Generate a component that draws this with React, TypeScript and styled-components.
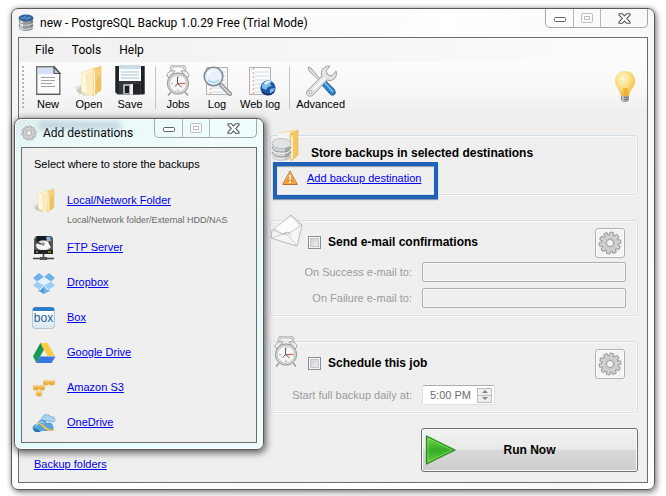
import React from "react";
import styled, { createGlobalStyle } from "styled-components";

const GlobalStyle = createGlobalStyle`
  * { box-sizing: border-box; }
  body { margin: 0; background: #fff; }
  button, input { font: inherit; color: inherit; margin: 0; }
`;

const Page = styled.main`
  padding: 8px 11px 6px;
  font: 11px/15px "Liberation Sans", Arial, sans-serif;
  color: #000;
`;

const Frame = styled.section`
  border: 1px solid #5a5a5a;
  border-radius: 7px;
  padding: 0 6px 6px;
`;

const MainWindow = styled(Frame)`
  position: relative;
  background: linear-gradient(100deg, #f3f3f3 0, #fff 12%, #fbfbfb 50%, #fff 60%, #f8f8f8 90%, #fff 100%);
  box-shadow: 0 0 5px rgba(0, 0, 0, 0.35), 2px 3px 6px rgba(0, 0, 0, 0.35);
`;

const Dialog = styled(Frame)`
  position: absolute;
  left: 2px;
  top: 109px;
  width: 250px;
  background: linear-gradient(150deg, #dcebeb 0, #e9f8f8 8%, #f2fdfd 30%, #e2fafa 60%, #effdfd 100%);
  box-shadow: inset 0 0 0 1px #fafeff, 1px 2px 7px 1px rgba(0, 0, 0, 0.6);
`;

const Smudge = styled.span`
  position: absolute;
  left: 18px;
  top: 3px;
  width: 82px;
  height: 7px;
  background: #8ea9c4;
  opacity: 0.5;
  filter: blur(3px);
`;

const TitleBar = styled.header`
  position: relative;
  display: flex;
  align-items: center;
  height: 28px;
  font-size: 12px;
`;

const Title = styled.h1`
  flex: 1;
  margin: 0 0 0 6px;
  font: 12px/16px Roboto, "Liberation Sans", sans-serif;
`;

const WindowButtons = styled.div`
  align-self: flex-start;
  display: flex;
  height: 19px;
  border: 1px solid #a4a8aa;
  border-top: 0;
  border-radius: 0 0 5px 5px;
`;

const WindowButton = styled.button<{ $wide?: boolean }>`
  width: ${(p) => (p.$wide ? 47 : 27)}px;
  padding: 0;
  border: 0;
  border-left: 1px solid #b4b8ba;
  background: none;
  display: flex;
  align-items: center;
  justify-content: center;
  &:first-child { border-left: 0; }
`;

const Client = styled.div`
  border: 1px solid #6d6d6d;
  background: #efefef;
`;

const MenuBar = styled.nav`
  display: flex;
  height: 24px;
  padding-left: 10px;
  background: linear-gradient(90deg, #f0f0f0, #fcfcfc);
`;

const MenuItem = styled.button`
  border: 0;
  background: none;
  padding: 0 12px 0 6px;
  font: 12px/24px Roboto, "Liberation Sans", sans-serif;
`;

const ToolBar = styled.div`
  display: flex;
  gap: 1px;
  height: 50px;
  padding: 3px 11px 0 3px;
  background: linear-gradient(#fcfcfc, #f7f7f7 60%, #efefef);
`;

const Grip = styled.span`
  width: 2px;
  height: 43px;
  margin: 1px 3px 0 0;
  background: repeating-linear-gradient(#b5b5b5 0 2px, transparent 2px 4px);
`;

const Tool = styled.button<{ $narrow?: boolean }>`
  min-width: ${(p) => (p.$narrow ? 36 : 40)}px;
  padding: 0 ${(p) => (p.$narrow ? 0 : 4)}px;
  border: 0;
  background: none;
  display: flex;
  flex-direction: column;
  align-items: center;
  line-height: 15px;
  white-space: nowrap;
  svg { display: block; }
`;

const ToolSeparator = styled.span`
  width: 1px;
  height: 43px;
  margin: 1px 1px 0 4px;
  background: #c4c4c4;
`;

const Hint = styled.button`
  margin-left: auto;
  border: 0;
  padding: 0;
  background: none;
  align-self: center;
`;

const Body = styled.div`
  display: flex;
  padding: 23px 9px 10px 15px;
`;

const Side = styled.div`
  flex: 0 0 236px;
  display: flex;
  flex-direction: column;
  justify-content: flex-end;
  align-items: flex-start;
`;

const Jobs = styled.div`
  flex: 1;
  display: flex;
  flex-direction: column;
  gap: 25px;
`;

const Link = styled.a`
  color: #0000f0;
  text-decoration: underline;
`;

const Panel = styled.section`
  position: relative;
  padding: 7px 11px 7px 37px;
  border: 1px solid #d3dfe8;
  border-radius: 3px;
  box-shadow: inset 0 0 0 1px #f8f8f8, 0 1px 0 #fafafa;
`;

const PanelIcon = styled.span<{ $small?: boolean }>`
  position: absolute;
  left: ${(p) => (p.$small ? 0 : -2)}px;
  top: ${(p) => (p.$small ? -6 : -8)}px;
  svg { display: block; }
`;

const Heading = styled.h2`
  margin: 0 0 5px 3px;
  font: bold 12px/20px "Liberation Sans", Arial, sans-serif;
`;

const LinkRow = styled.div`
  display: flex;
  align-items: center;
  height: 20px;
  margin-bottom: -1px;
  svg { margin: 0 9px 0 -26px; }
`;

const Marker = styled.span`
  position: absolute;
  inset: 26px auto -5px 2px;
  width: 165px;
  border: 4px solid #1f62b8;
  box-shadow: 0 1px 1px #8c99a8, inset 0 1px 1px #8c99a8;
  pointer-events: none;
`;

const PanelHead = styled.div<{ $spaced?: boolean }>`
  display: flex;
  align-items: center;
  justify-content: space-between;
  margin-bottom: ${(p) => (p.$spaced ? 6 : 4)}px;
`;

const CheckLabel = styled.label`
  display: flex;
  align-items: center;
  gap: 7px;
  margin-top: -2px;
  font: bold 12px/16px "Liberation Sans", Arial, sans-serif;
`;

const Check = styled.input`
  appearance: none;
  width: 13px;
  height: 13px;
  border: 1px solid #8b8f92;
  background: linear-gradient(135deg, #c6cbd0, #f4f4f4);
  box-shadow: inset 0 0 0 1px #f4f4f4, inset 0 0 0 2px #c4c8cb;
`;

const GearButton = styled.button`
  display: grid;
  place-items: center;
  width: 30px;
  height: 30px;
  margin-right: 1px;
  padding: 0;
  border: 1px solid #aeb2b5;
  border-radius: 3px;
  background: #f4f4f4;
  box-shadow: inset 0 0 0 1px #fcfcfc;
`;

const FieldRow = styled.div`
  display: grid;
  grid-template-columns: 104px 1fr;
  column-gap: 10px;
  align-items: center;
  color: #9b9b9b;
  & + & { margin-top: 6px; }
`;

const FieldLabel = styled.label`
  justify-self: end;
  white-space: nowrap;
`;

const TextInput = styled.input`
  width: 100%;
  min-width: 0;
  height: 20px;
  border: 1px solid #afafaf;
  border-radius: 2px;
  background: #efefef;
  box-shadow: inset 0 0 0 1px #f7f7f7;
`;

const TimeBox = styled.div`
  display: flex;
  align-items: center;
  width: 73px;
  height: 20px;
  padding: 0 2px 0 7px;
  border: 1px solid #dbe3ea;
  border-top-color: #abadb3;
  border-radius: 2px;
  background: #fff;
`;

const TimeInput = styled.input`
  flex: 1;
  min-width: 0;
  padding: 0;
  border: 0;
  background: none;
  color: #6d6d6d;
  font: 11px/16px "Liberation Sans", Arial, sans-serif;
`;

const Spinner = styled.span`
  display: grid;
  width: 15px;
  height: 15px;
  border: 1px solid #bdbdbd;
`;

const SpinButton = styled.button`
  display: grid;
  place-items: center;
  padding: 0;
  border: 0;
  background: #efefef;
  & + & { border-top: 1px solid #bdbdbd; }
`;

const RunButton = styled.button`
  position: relative;
  align-self: flex-end;
  width: 217px;
  height: 44px;
  margin-top: -10px;
  border: 1px solid #707070;
  border-radius: 3px;
  background: linear-gradient(#f2f2f2, #e9e9e9 48%, #d9d9d9 50%, #cdcdcd);
  box-shadow: inset 0 0 0 1px #fafafa;
  font: bold 12px/16px "Liberation Sans", Arial, sans-serif;
  svg { position: absolute; left: 3px; top: 5px; }
`;

const DialogText = styled.p`
  margin: 0;
  padding: 0 0 3px 12px;
  line-height: 32px;
`;

const DestinationList = styled.ul`
  list-style: none;
  margin: 0;
  padding: 0 0 2px 10px;
`;

const Destination = styled.li`
  display: grid;
  grid-template-columns: 24px 1fr;
  grid-template-rows: 35px;
  column-gap: 11px;
  align-items: center;
  justify-items: start;
  svg { display: block; }
`;

const Note = styled.span`
  grid-column: 2;
  margin: -4px 0 4px;
  font: 9px/12px "Liberation Sans", Arial, sans-serif;
  color: #686868;
  white-space: nowrap;
`;

/* ---------- drawings ---------- */

const gearTeeth = Array.from({ length: 10 }, (_, i) => i * 36);

const GearIcon = ({ size }: { size: number }) => (
  <svg width={size} height={size} viewBox="0 0 24 24">
    <g fill="#c9c9c9" stroke="#a0a0a0" strokeWidth="1.2">
      {gearTeeth.map((a) => (
        <rect key={a} x="10.1" y="1.2" width="3.8" height="6" rx="1" transform={`rotate(${a + 10} 12 12)`} />
      ))}
      <circle cx="12" cy="12" r="8.2" />
    </g>
    <g fill="#d2d2d2">
      {gearTeeth.map((a) => (
        <rect key={a} x="10.8" y="2" width="2.4" height="5" transform={`rotate(${a + 10} 12 12)`} />
      ))}
      <circle cx="12" cy="12" r="7.7" />
    </g>
    <circle cx="12" cy="12" r="5" fill="none" stroke="#c6c6c6" strokeWidth="1.4" />
    <circle cx="12" cy="12" r="3.6" fill="#f4f4f4" stroke="#9b9b9b" strokeWidth="1" />
  </svg>
);

const DatabaseIcon = () => (
  <svg width="16" height="18" viewBox="0 0 16 18">
    <path d="M1 4v10c0 2 3 3 7 3s7-1 7-3V4z" fill="#9a9ea1" />
    <path d="M2 4v11l3 1.4V5z" fill="#d7d9da" />
    <path d="M12 5v11l3-2V4z" fill="#7f8487" />
    <path d="M1 8c0 2 3 3 7 3s7-1 7-3M1 12c0 2 3 3 7 3s7-1 7-3" fill="none" stroke="#e4e6e7" strokeWidth="1" />
    <path d="M1 7c0 2 3 3 7 3s7-1 7-3M1 11c0 2 3 3 7 3s7-1 7-3" fill="none" stroke="#85898c" strokeWidth=".8" />
    <ellipse cx="8" cy="4" rx="7.5" ry="3.6" fill="#2f639d" />
    <path d="M3 4h2M6 3h2M8 5h2M11 3.500h2M6 5V3M10 5V3" stroke="#8fb6dc" strokeWidth=".9" />
  </svg>
);

const MinimizeIcon = () => (
  <svg width="12" height="12" viewBox="0 0 12 12">
    <rect x=".5" y="5.500" width="11" height="4" rx="1" fill="#fff" stroke="#5b6068" />
  </svg>
);
const MaximizeIcon = () => (
  <svg width="12" height="10" viewBox="0 0 12 10">
    <rect x=".5" y=".5" width="11" height="9" rx="1" fill="#fafafa" stroke="#bfbfbf" />
    <rect x="3.500" y="3.500" width="5" height="3" fill="#fff" stroke="#bfbfbf" />
  </svg>
);
const CloseIcon = () => (
  <svg width="13" height="11" viewBox="0 0 13 11">
    <path d="M1 .7h3.300L6.500 3 8.700.7H12v1.400L8.700 5.500 12 8.900v1.400H8.700L6.500 8l-2.200 2.300H1V8.900l3.300-3.400L1 2.100z" fill="#fff" stroke="#51565e" strokeWidth="1.1" />
  </svg>
);

const NewIcon = () => (
  <svg width="30" height="32" viewBox="0 0 30 32">
    <path d="M3.700 1.700h17.500l5.600 6.500v21.100H3.700z" fill="#fbfbfb" stroke="#707274" strokeWidth="1.4" />
    <path d="M5 3h15v6H5z" fill="#d5e0f6" />
    <path d="M21 2v6.500h6z" fill="#c9cbce" stroke="#4d5052" strokeWidth="1.2" />
    <path d="M8 12.500h14M8 15.500h14M8 18.500h11M8 21.500h14" stroke="#a1a3a5" strokeWidth="1" />
    <path d="M3 29.500h24" stroke="#55585a" />
  </svg>
);

const FolderIcon = ({ size }: { size: number }) => (
  <svg width={size} height={size} viewBox="0 0 30 32">
    <path d="M1 22l6-2v9l-2 1z" fill="#c5b9a2" opacity=".4" />
    <path d="M2 26l5-4 8 8-4 1z" fill="#9d9481" opacity=".3" />
    <path d="M7 7l14-5 2 2v25l-9 2-7-5z" fill="#fae7b8" />
    <path d="M8 8l9-3v25l-9-4z" fill="#fff8e4" />
    <path d="M11 9l10-5v23l-8 3z" fill="#fdebc0" />
    <path d="M20 4l7-3v24l-8 6z" fill="#f7d078" />
    <path d="M19 6l2-1v24l-2 2z" fill="#fff5d6" />
    <path d="M23 12l4-2v15l-6 4z" fill="#eab54a" opacity=".55" />
    <path d="M20 4l7-3v24l-8 6z" fill="none" stroke="#e6c06c" strokeWidth=".6" />
  </svg>
);

const SaveIcon = () => (
  <svg width="30" height="32" viewBox="0 0 30 32">
    <path d="M.5 1h29v28.500H2.500l-2-2z" fill="#33363b" />
    <path d="M.5 1h3v27l-3-1zM26 1h3.500v28H26z" fill="#1d2024" />
    <path d="M4 0h22v16H4z" fill="#fafcfd" />
    <path d="M4 0h22v4H4z" fill="#cbdde7" />
    <path d="M6 7h18M6 10h18M6 13h18" stroke="#a9c2cf" strokeWidth="1.2" />
    <path d="M8 19h17v10.500H8z" fill="#a9acae" />
    <path d="M18 19h7v10.500h-7z" fill="#222529" />
    <path d="M10 21h4v7h-4z" fill="#1c1e21" />
    <path d="M15 19h3v10.500h-3z" fill="#ededed" />
  </svg>
);

const ClockIcon = () => (
  <svg width="30" height="32" viewBox="0 0 30 32">
    <path d="M8 8V4q0-3 3-3h8q3 0 3 3v4" fill="none" stroke="#9c9c9c" strokeWidth="2.400" />
    <path d="M8 8V4q0-3 3-3h8q3 0 3 3v4" fill="none" stroke="#f3f3f3" strokeWidth="1.1" />
    <path d="M4 11c0-4 4-6 8-5l-6 7zM26 11c0-4-4-6-8-5l6 7z" fill="#ededed" stroke="#a0a0a0" />
    <path d="M8 27l-3 3.500M22 27l3 3.500" stroke="#969696" strokeWidth="1.400" />
    <circle cx="15" cy="18.500" r="10.6" fill="#dcdcdc" stroke="#8f8f8f" />
    <circle cx="15" cy="18.500" r="8.600" fill="#f7f7f7" stroke="#b8b8b8" strokeWidth=".8" />
    <path d="M15 11v2M15 24v2M8 18.500h2M20 18.500h2" stroke="#aaa" />
    <path d="M14.500 18.500h8" stroke="#d06555" strokeWidth="1.200" />
    <path d="M14.500 12v6.500l4 3.500M14.500 18.500l-2.500 3" fill="none" stroke="#5a5a5a" strokeWidth="1" />
  </svg>
);

const PageLines = () => (
  <>
    <path d="M5.500 2.500h21v27h-21z" fill="#fbfbfb" stroke="#aeb2b6" />
    <path d="M11 7h14M11 11h14M11 15h14M11 19h14M11 23h14M11 27h14" stroke="#cbdcf1" strokeWidth="1.200" />
    <path d="M9.500 3v26" stroke="#f0b28f" strokeDasharray="2 2" strokeWidth="1.500" />
  </>
);

const LogIcon = () => (
  <svg width="32" height="32" viewBox="0 0 32 32">
    <PageLines />
    <path d="M20 20l9 9" stroke="#85888c" strokeWidth="4" strokeLinecap="round" />
    <path d="M20 20l9 9" stroke="#d4d7da" strokeWidth="1.800" strokeLinecap="round" />
    <circle cx="12.500" cy="11.500" r="9.300" fill="#e6f3fc" fillOpacity=".88" stroke="#83888e" strokeWidth="1.600" />
    <path d="M6 12c0-5 4-7 9-6-5 1-7 3-9 6z" fill="#fff" />
    <path d="M7 15q5 5 11 0" fill="none" stroke="#b7d8ef" strokeWidth="2" />
  </svg>
);

const WebLogIcon = () => (
  <svg width="32" height="32" viewBox="0 0 32 32">
    <PageLines />
    <circle cx="24" cy="23" r="7.600" fill="#1d57a4" />
    <path d="M18 20c2-4 6-5 10-4l-2 3 2 2-4 1-2 3-4-2zM26 24l5-1-2 4-3 2z" fill="#7fbdea" />
    <path d="M20 18q3-3 7-2l-5 4z" fill="#e2f3fd" />
    <path d="M18 27q6 5 12 0" fill="none" stroke="#0d2f6b" strokeWidth="1.500" />
  </svg>
);

const ToolsIcon = () => (
  <svg width="32" height="32" viewBox="0 0 32 32">
    <path d="M3 2l3 1 11 13-1 1L4 6z" fill="#dcdedf" stroke="#9a9ea1" strokeWidth=".9" />
    <path d="M17 16l3-1 9 9q3 4 0 6-3 1-5-2l-8-9z" fill="#2f80cb" stroke="#1f5c98" strokeWidth=".8" />
    <path d="M19 17l9 10" stroke="#8ac0ee" strokeWidth="1.500" />
    <path d="M2 26L17 11c-2-5 1-10 8-10l-4 5 2 4 4 1 4-5c2 7-4 11-9 9L8 30c-4 3-8 0-6-4z" fill="#e3e5e6" stroke="#9a9ea1" strokeWidth="1" />
    <circle cx="5.500" cy="27" r="1.600" fill="#fff" stroke="#999" strokeWidth=".8" />
    <path d="M8 25L20 13" stroke="#fff" strokeWidth="1.500" />
  </svg>
);

const BulbIcon = () => (
  <svg width="22" height="32" viewBox="0 0 22 32">
    <defs>
      <radialGradient id="bulb" cx=".4" cy=".3" r=".7">
        <stop offset="0" stopColor="#fff6cf" />
        <stop offset=".6" stopColor="#fbd978" />
        <stop offset="1" stopColor="#eeb53d" />
      </radialGradient>
    </defs>
    <path d="M11 0C4 0 1 5 1 10c0 6 5 8 6 15h8c1-7 6-9 6-15 0-5-3-10-10-10z" fill="url(#bulb)" />
    <path d="M9 17h5l-1 7h-3z" fill="#eda529" opacity=".7" />
    <path d="M7 25h8v4l-2 2H9l-2-2z" fill="#9fa1a3" />
    <path d="M7 26.500h8M7 28.500h8" stroke="#7e8082" />
    <path d="M9 25v5" stroke="#eee" />
  </svg>
);

const StoreIcon = () => (
  <svg width="34" height="36" viewBox="0 0 34 36">
    <path d="M10 5l14-3 3 1v27l-8 2z" fill="#f7dda1" />
    <path d="M9 6l12-2v22H9z" fill="#f5f5f5" />
    <path d="M21 6l8-4v25l-7 6z" fill="#f3c663" stroke="#e2b75c" strokeWidth=".6" />
    <path d="M22 8l2-1v23l-2 2z" fill="#fff0c0" />
    <path d="M3 15v13c0 3 4 5 9 5s10-2 10-5V15z" fill="#d0d2d3" />
    <path d="M16 19h6v10l-6 3z" fill="#a5a8aa" />
    <path d="M3 19q1 5 9.500 5T22 19M3 24q1 5 9.500 5T22 24" fill="none" stroke="#989c9e" strokeWidth="1.200" />
    <path d="M3 20.500q1 5 9.500 5T22 20.500M3 25.500q1 5 9.500 5T22 25.500" fill="none" stroke="#f5f5f5" />
    <ellipse cx="12.500" cy="15.500" rx="9.500" ry="5" fill="#e2e3e4" stroke="#b0b3b5" strokeWidth=".8" />
  </svg>
);

const MailIcon = () => (
  <svg width="36" height="36" viewBox="0 0 36 36">
    <path d="M3 18L22 2l11 10-5 21L2 25z" fill="#e9e9e9" stroke="#b5b5b5" />
    <path d="M6 15L22 3l9 10-14 11z" fill="#fcfcfc" stroke="#d4d4d4" strokeWidth=".7" />
    <path d="M3 17l14 5 16-10-5 21-26-8z" fill="#f6f6f6" stroke="#bdbdbd" strokeWidth=".8" />
    <path d="M2 25l15-5 11 13" fill="none" stroke="#cecece" />
    <path d="M13 21l6-2 3 3" fill="none" stroke="#b8b8b8" />
  </svg>
);

const WarningIcon = () => (
  <svg width="16" height="16" viewBox="0 0 16 16">
    <path d="M8 1l7.300 13.500H.7z" fill="#f08f24" stroke="#b87433" strokeLinejoin="round" />
    <path d="M8 2.500L13.500 13h-11z" fill="none" stroke="#ffc56c" strokeWidth=".8" />
    <path d="M8 5v5M8 11v2" stroke="#fff" strokeWidth="1.600" />
  </svg>
);

const PlayIcon = () => (
  <svg width="32" height="32" viewBox="0 0 32 32">
    <defs>
      <linearGradient id="play" x1="0" y1="0" x2="0" y2="1">
        <stop offset="0" stopColor="#75d84d" />
        <stop offset=".5" stopColor="#36ac28" />
        <stop offset="1" stopColor="#5ccc38" />
      </linearGradient>
    </defs>
    <path d="M1.500 2l28.500 14L1.500 30z" fill="url(#play)" stroke="#2a8c22" strokeWidth="1.300" strokeLinejoin="round" />
    <path d="M3 4.500L27 16 3 27.500z" fill="none" stroke="#9be67a" strokeWidth=".6" />
  </svg>
);

const FtpIcon = () => (
  <svg width="24" height="26" viewBox="0 0 24 26">
    <path d="M4 1h15l2 2v15H2V4z" fill="#55585b" />
    <path d="M5 1h10v6H4z" fill="#17191c" />
    <path d="M14 2h4l1 4h-4z" fill="#8eb4d6" />
    <ellipse cx="11.500" cy="10.500" rx="7.500" ry="5" fill="#f5f5f5" stroke="#999" strokeWidth=".6" />
    <circle cx="11" cy="9" r="1.800" fill="#8c8f91" />
    <path d="M4 7l5 2M17 7l2 4" stroke="#333" strokeWidth="1.400" />
    <path d="M2 15h19v4H2z" fill="#222527" />
    <path d="M4 17h2M16 17h3" stroke="#d8cd3a" />
    <path d="M11.500 19v5M1 23.500h21" stroke="#3d4042" strokeWidth="1.600" />
    <path d="M8 22h7v3H8z" fill="#505355" />
  </svg>
);

const DropboxIcon = () => (
  <svg width="24" height="22" viewBox="0 0 24 22">
    <path d="M7 1l5 4-7 4.500L1 6zM17 1l-5 4 7 4.500L23 6z" fill="#6fb3ec" />
    <path d="M5 9.500l7 4-5 4-6-4zM19 9.500l-7 4 5 4 6-4z" fill="#9bcdf5" />
    <path d="M12 5l7 4.500-7 4-7-4z" fill="#e3f2fd" />
    <path d="M6 17.500l2 1 4-4 4 4 2-1v1L12 22l-6-3.500z" fill="#4a97de" />
    <path d="M12 14.500l4 4 2-1L12 21.500z" fill="#7bb9ef" />
  </svg>
);

const BoxLogo = styled.span`
  display: flex;
  justify-content: center;
  width: 23px;
  height: 22px;
  border: 1px solid #b4c6d2;
  border-top: 4px solid #2c7fbe;
  border-radius: 4px;
  background: linear-gradient(#fff, #dbe6ee);
  color: #20639b;
  font: 12px/15px "Liberation Sans", Arial, sans-serif;
`;

const DriveIcon = () => (
  <svg width="24" height="22" viewBox="0 0 24 22">
    <path d="M8.500 1L12 7.500 4.500 21 1 14.500z" fill="#1a9a58" />
    <path d="M8.500 1h7L23 14h-7.500z" fill="#fccb3f" />
    <path d="M8 14.500h15.500L19.500 21h-15z" fill="#3976e0" />
    <path d="M1 14.500L8.500 1 10 4z" fill="#11814a" opacity=".4" />
  </svg>
);

const s3Cubes = [[2, 8], [8, 8], [5, 14], [12, 3], [18, 3]];

const AmazonIcon = () => (
  <svg width="25" height="20" viewBox="0 0 25 20">
    {s3Cubes.map(([x, y]) => (
      <g key={`${x}-${y}`}>
        <rect x={x - 1} y={y - 1} width="6" height="5.500" rx="2" fill="#eeb74c" />
        <path d={`M${x} ${y}h4`} stroke="#fbdc93" strokeWidth="1.200" />
        <path d={`M${x + 2} ${y + 1}v3`} stroke="#d99c2f" strokeWidth=".8" />
      </g>
    ))}
  </svg>
);

const OneDriveIcon = () => (
  <svg width="25" height="20" viewBox="0 0 25 20">
    <path d="M9 7c1-6 8-7 10-3 4-1 5 3 3 5z" fill="#a9d3ef" stroke="#6fa9d1" strokeWidth=".7" />
    <path d="M2 18c-3-3-1-7 3-7 1-5 8-6 10-1 4-2 8 2 6 8z" fill="#5aa3d4" />
    <path d="M4 13q4-6 8-3" fill="none" stroke="#9bcdeb" strokeWidth="1.500" />
    <path d="M0 9q10 0 15 6 4 3 9 1-5 4-11 0Q7 9 0 9z" fill="#f9c646" />
    <path d="M1 15q4 0 8 4H3z" fill="#2b72ae" />
  </svg>
);

/* ---------- content ---------- */

const WindowControls = () => (
  <WindowButtons>
    <WindowButton aria-label="Minimize"><MinimizeIcon /></WindowButton>
    <WindowButton aria-label="Maximize" disabled><MaximizeIcon /></WindowButton>
    <WindowButton aria-label="Close" $wide><CloseIcon /></WindowButton>
  </WindowButtons>
);

const destinations = [
  { name: "Local/Network Folder", icon: <FolderIcon size={25} />, note: "Local/Network folder/External HDD/NAS" },
  { name: "FTP Server", icon: <FtpIcon /> },
  { name: "Dropbox", icon: <DropboxIcon /> },
  { name: "Box", icon: <BoxLogo aria-hidden>box</BoxLogo> },
  { name: "Google Drive", icon: <DriveIcon /> },
  { name: "Amazon S3", icon: <AmazonIcon /> },
  { name: "OneDrive", icon: <OneDriveIcon /> },
];

export default function App() {
  return (
    <Page>
      <GlobalStyle />
      <MainWindow>
        <TitleBar>
          <DatabaseIcon />
          <Title>new - PostgreSQL Backup 1.0.29 Free (Trial Mode)</Title>
          <WindowControls />
        </TitleBar>
        <Client>
          <MenuBar>
            <MenuItem>File</MenuItem>
            <MenuItem>Tools</MenuItem>
            <MenuItem>Help</MenuItem>
          </MenuBar>
          <ToolBar>
            <Grip />
            <Tool><NewIcon />New</Tool>
            <Tool><FolderIcon size={32} />Open</Tool>
            <Tool><SaveIcon />Save</Tool>
            <ToolSeparator />
            <Tool><ClockIcon />Jobs</Tool>
            <Tool $narrow><LogIcon />Log</Tool>
            <Tool><WebLogIcon />Web log</Tool>
            <ToolSeparator />
            <Tool><ToolsIcon />Advanced</Tool>
            <Hint aria-label="Hints"><BulbIcon /></Hint>
          </ToolBar>
          <Body>
            <Side>
              <Link href="#folders">Backup folders</Link>
            </Side>
            <Jobs>
              <Panel>
                <PanelIcon><StoreIcon /></PanelIcon>
                <Heading>Store backups in selected destinations</Heading>
                <LinkRow>
                  <WarningIcon />
                  <Link href="#add">Add backup destination</Link>
                </LinkRow>
                <Marker />
              </Panel>
              <Panel>
                <PanelIcon><MailIcon /></PanelIcon>
                <PanelHead>
                  <CheckLabel><Check type="checkbox" />Send e-mail confirmations</CheckLabel>
                  <GearButton aria-label="E-mail settings"><GearIcon size={24} /></GearButton>
                </PanelHead>
                <FieldRow>
                  <FieldLabel htmlFor="ok-mail">On Success e-mail to:</FieldLabel>
                  <TextInput id="ok-mail" disabled />
                </FieldRow>
                <FieldRow>
                  <FieldLabel htmlFor="fail-mail">On Failure e-mail to:</FieldLabel>
                  <TextInput id="fail-mail" disabled />
                </FieldRow>
              </Panel>
              <Panel>
                <PanelIcon $small><ClockIcon /></PanelIcon>
                <PanelHead $spaced>
                  <CheckLabel><Check type="checkbox" />Schedule this job</CheckLabel>
                  <GearButton aria-label="Schedule settings"><GearIcon size={24} /></GearButton>
                </PanelHead>
                <FieldRow>
                  <FieldLabel htmlFor="start-time">Start full backup daily at:</FieldLabel>
                  <TimeBox>
                    <TimeInput id="start-time" defaultValue="5:00 PM" disabled />
                    <Spinner>
                      <SpinButton aria-label="Later"><svg width="6" height="3"><path d="M0 3l3-3 3 3z" fill="#858585" /></svg></SpinButton>
                      <SpinButton aria-label="Earlier"><svg width="6" height="3"><path d="M0 0l3 3 3-3z" fill="#858585" /></svg></SpinButton>
                    </Spinner>
                  </TimeBox>
                </FieldRow>
              </Panel>
              <RunButton><PlayIcon />Run Now</RunButton>
            </Jobs>
          </Body>
        </Client>
        <Dialog role="dialog" aria-label="Add destinations">
          <TitleBar>
            <Smudge />
            <GearIcon size={16} />
            <Title as="h2">Add destinations</Title>
            <WindowControls />
          </TitleBar>
          <Client>
            <DialogText>Select where to store the backups</DialogText>
            <DestinationList>
              {destinations.map((d) => (
                <Destination key={d.name}>
                  {d.icon}
                  <Link href="#destination">{d.name}</Link>
                  {d.note && <Note>{d.note}</Note>}
                </Destination>
              ))}
            </DestinationList>
          </Client>
        </Dialog>
      </MainWindow>
    </Page>
  );
}
